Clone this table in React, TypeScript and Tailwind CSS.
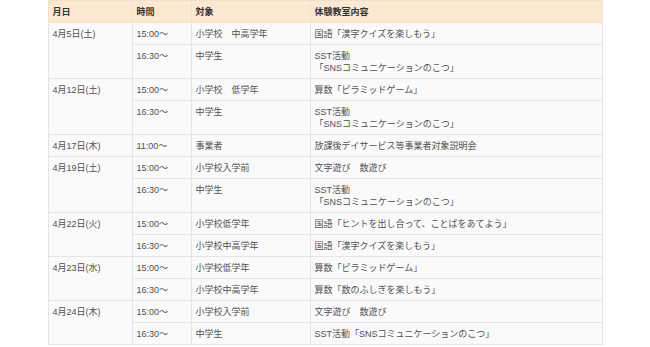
const rows = [
  { date: '4月5日(土)', items: [
    { time: '15:00〜', target: '小学校　中高学年', content: ['国語「漢字クイズを楽しもう」'] },
    { time: '16:30〜', target: '中学生', content: ['SST活動', '「SNSコミュニケーションのこつ」'] },
  ] },
  { date: '4月12日(土)', items: [
    { time: '15:00〜', target: '小学校　低学年', content: ['算数「ピラミッドゲーム」'] },
    { time: '16:30〜', target: '中学生', content: ['SST活動', '「SNSコミュニケーションのこつ」'] },
  ] },
  { date: '4月17日(木)', items: [
    { time: '11:00〜', target: '事業者', content: ['放課後デイサービス等事業者対象説明会'] },
  ] },
  { date: '4月19日(土)', items: [
    { time: '15:00〜', target: '小学校入学前', content: ['文字遊び　数遊び'] },
    { time: '16:30〜', target: '中学生', content: ['SST活動', '「SNSコミュニケーションのこつ」'] },
  ] },
  { date: '4月22日(火)', items: [
    { time: '15:00〜', target: '小学校低学年', content: ['国語「ヒントを出し合って、ことばをあてよう」'] },
    { time: '16:30〜', target: '小学校中高学年', content: ['国語「漢字クイズを楽しもう」'] },
  ] },
  { date: '4月23日(水)', items: [
    { time: '15:00〜', target: '小学校低学年', content: ['算数「ピラミッドゲーム」'] },
    { time: '16:30〜', target: '小学校中高学年', content: ['算数「数のふしぎを楽しもう」'] },
  ] },
  { date: '4月24日(木)', items: [
    { time: '15:00〜', target: '小学校入学前', content: ['文字遊び　数遊び'] },
    { time: '16:30〜', target: '中学生', content: ['SST活動「SNSコミュニケーションのこつ」'] },
  ] },
]

const cell = 'border border-[#e4e4e4] px-[4px] pt-[5px] pb-[4px] align-top text-left'

export default function App() {
  return (
    <div className="w-[650px] h-[347px] bg-white overflow-hidden">
      <table
        className="mx-auto w-[555px] table-fixed border-collapse text-[9px] leading-[12px] text-[#505050]"
        style={{ fontFamily: '"Liberation Sans", "Noto Sans CJK JP", sans-serif' }}
      >
        <colgroup>
          <col className="w-[84px]" />
          <col className="w-[59px]" />
          <col className="w-[119px]" />
          <col />
        </colgroup>
        <thead>
          <tr className="bg-[#fde8d1] text-[#333] font-bold">
            <th className={`${cell} border-[#f0e0cc]`}>月日</th>
            <th className={`${cell} border-[#f0e0cc]`}>時間</th>
            <th className={`${cell} border-[#f0e0cc]`}>対象</th>
            <th className={`${cell} border-[#f0e0cc]`}>体験教室内容</th>
          </tr>
        </thead>
        <tbody className="bg-[#fafafa]">
          {rows.map((r) =>
            r.items.map((it, i) => (
              <tr key={r.date + it.time}>
                {i === 0 && (
                  <td rowSpan={r.items.length} className={cell}>{r.date}</td>
                )}
                <td className={cell}>{it.time}</td>
                <td className={cell}>{it.target}</td>
                <td className={cell}>
                  {it.content.map((line) => (
                    <div key={line}>{line}</div>
                  ))}
                </td>
              </tr>
            ))
          )}
        </tbody>
      </table>
    </div>
  )
}
